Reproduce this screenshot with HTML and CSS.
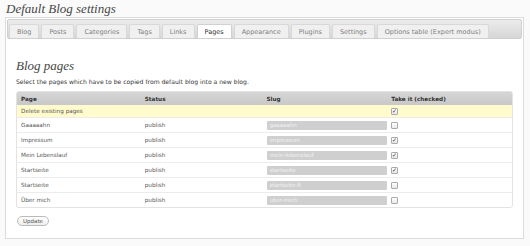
FILE: index.html
```html
<!DOCTYPE html>
<html lang="en">
<head>
  <meta charset="UTF-8" />
  <title>Default Blog settings</title>
  <link rel="stylesheet" href="styles.css">
</head>
<body>
  <div class="wrap">
    <h2>Default Blog settings</h2>
    <div class="box">
      <div class="tabs">
        <a>Blog</a>
        <a>Posts</a>
        <a>Categories</a>
        <a>Tags</a>
        <a>Links</a>
        <a class="active">Pages</a>
        <a>Appearance</a>
        <a>Plugins</a>
        <a>Settings</a>
        <a>Options table (Expert modus)</a>
      </div>

      <div class="panel">
        <h3>Blog pages</h3>
        <p class="desc">Select the pages which have to be copied from default blog into a new blog.</p>

        <table class="pages">
          <thead>
            <tr><th>Page</th><th>Status</th><th>Slug</th><th>Take it (checked)</th></tr>
          </thead>
          <tbody>
            <tr class="warn"><td>Delete existing pages</td><td></td><td></td><td><input type="checkbox" checked></td></tr>
            <tr><td>Gaaaaahn</td><td>publish</td><td><input class="slug" value="gaaaaahn" disabled></td><td><input type="checkbox"></td></tr>
            <tr><td>Impressum</td><td>publish</td><td><input class="slug" value="impressum" disabled></td><td><input type="checkbox" checked></td></tr>
            <tr><td>Mein Lebenslauf</td><td>publish</td><td><input class="slug" value="mein-lebenslauf" disabled></td><td><input type="checkbox" checked></td></tr>
            <tr><td>Startseite</td><td>publish</td><td><input class="slug" value="startseite" disabled></td><td><input type="checkbox" checked></td></tr>
            <tr><td>Startseite</td><td>publish</td><td><input class="slug" value="startseite-6" disabled></td><td><input type="checkbox"></td></tr>
            <tr class="last"><td>Über mich</td><td>publish</td><td><input class="slug" value="uber-mich" disabled></td><td><input type="checkbox"></td></tr>
          </tbody>
        </table>

        <button class="update">Update</button>
      </div>
    </div>
  </div>
</body>
</html>
```

FILE: styles.css
```css
/* page */
body {
  margin: 0;
  background: #f1f1f1;
  font-family: 'DejaVu Sans', Verdana, sans-serif;
  color: #333;
}

.wrap {
  background: #fafafa;
  padding: 1px 6px 7px 5px;
}

h2 {
  margin: 1px 0 1px 1px;
  font-family: 'Liberation Serif', Georgia, serif;
  font-style: italic;
  font-weight: normal;
  font-size: 13px;
  line-height: 14px;
  color: #464646;
}

.box {
  background: #fff;
  border: 1px solid #dcdcdc;
  height: 220px;
}

/* tab bar */
.tabs {
  display: flex;
  gap: 2px;
  margin: 1px 1px 0 1px;
  padding: 4px 0 0 1px;
  height: 14px;
  background: linear-gradient(#ececec, #d6d6d6);
  border: 1px solid #d0d0d0;
  border-radius: 2px;
}
.tabs a {
  display: flex;
  align-items: center;
  padding: 0 7px;
  font-size: 6.5px;
  color: #808080;
  background: #f0f0f0;
  border: 1px solid #d8d8d8;
  border-bottom: none;
  border-radius: 2px 2px 0 0;
}
.tabs a.active {
  background: #fff;
  color: #333;
  border-color: #d0d0d0;
}

/* content */
.panel {
  padding: 0 10px 0 10px;
}

h3 {
  margin: 20px 0 0 0;
  font-family: 'Liberation Serif', Georgia, serif;
  font-style: italic;
  font-weight: normal;
  font-size: 13px;
  line-height: 13px;
  color: #464646;
}

.desc {
  margin: 6px 0 5px 0;
  font-size: 6.1px;
  line-height: 8px;
  color: #333;
}

.pages {
  width: 497px;
  table-layout: fixed;
  border-collapse: separate;
  border-spacing: 0;
  border: 1px solid #e3e3e3;
  border-radius: 3px;
  font-size: 5.7px;
}
.pages th {
  height: 13px;
  padding: 0 4px;
  text-align: left;
  font-weight: bold;
  color: #333;
  background: linear-gradient(#d6d6d6, #c8c8c8);
}
.pages td {
  height: 14px;
  padding: 0 4px;
  border-top: 1px solid #ececec;
  color: #555;
}
.pages th:nth-child(3), .pages td:nth-child(3) { padding-left: 2px; }
.pages th:nth-child(4), .pages td:nth-child(4) { padding-left: 3px; }
.pages tr.warn td {
  height: 12px;
  background: #fffbcc;
  border-top: none;
}

.slug {
  display: block;
  box-sizing: border-box;
  width: 120px;
  height: 9px;
  padding: 0 3px;
  border: none;
  border-radius: 1px;
  background: #cfcfcf;
  color: #f2f2f2;
  font-family: inherit;
  font-size: 5.5px;
}

input[type=checkbox] {
  appearance: none;
  position: relative;
  box-sizing: border-box;
  width: 7px;
  height: 7px;
  margin: 0;
  vertical-align: middle;
  border: 1px solid #aaa;
  border-radius: 1px;
  background: linear-gradient(#fff, #e8e8e8);
}
input[type=checkbox]:checked::after {
  content: "\2713";
  position: absolute;
  left: 0;
  top: -2px;
  font-size: 6px;
  line-height: 8px;
  color: #333;
}

.update {
  margin: 7px 0 0 1px;
  height: 10px;
  padding: 0 5px;
  font-family: inherit;
  font-size: 5.5px;
  color: #555;
  background: linear-gradient(#fff, #eee);
  border: 1px solid #bbb;
  border-radius: 6px;
}
```
